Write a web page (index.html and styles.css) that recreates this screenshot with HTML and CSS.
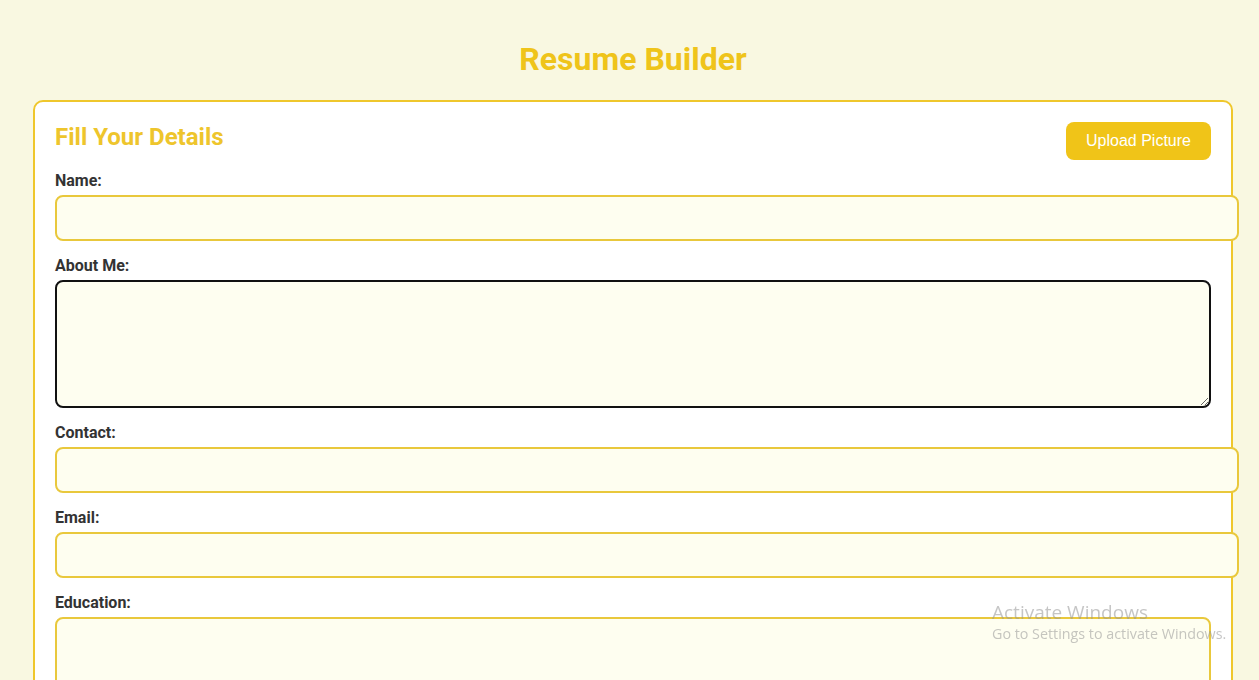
FILE: index.html
```html
<!DOCTYPE html>
<html lang="en">
<head>
<meta charset="utf-8">
<title>Resume Builder</title>
<link rel="stylesheet" href="styles.css">
</head>
<body>
<div class="page">
  <h1 class="title">Resume Builder</h1>
  <div class="card">
    <div class="card-head">
      <h2 class="card-title">Fill Your Details</h2>
      <button class="upload-btn" type="button">Upload Picture</button>
    </div>
    <label class="field-label" for="name">Name:</label>
    <input class="field-input" id="name" type="text">
    <label class="field-label" for="about">About Me:</label>
    <textarea class="field-area active" id="about" autofocus></textarea>
    <label class="field-label" for="contact">Contact:</label>
    <input class="field-input" id="contact" type="text">
    <label class="field-label" for="email">Email:</label>
    <input class="field-input" id="email" type="email">
    <label class="field-label" for="edu">Education:</label>
    <textarea class="field-area" id="edu"></textarea>
  </div>
</div>
<div class="watermark">
  <div class="wm-title">Activate Windows</div>
  <div class="wm-sub">Go to Settings to activate Windows.</div>
</div>
</body>
</html>
```

FILE: styles.css
```css
html, body {
  margin: 0;
  padding: 0;
  background: #f9f8e1;
  font-family: Roboto, "Liberation Sans", Arial, sans-serif;
  overflow: hidden;
}

.page {
  padding: 41px 26px 40px 33px;
}

.title {
  margin: 0 0 23px;
  text-align: center;
  font-size: 32px;
  line-height: 36px;
  font-weight: 700;
  color: #efc41a;
}

.card {
  background: #ffffff;
  border: 2px solid #efc72c;
  border-radius: 10px;
  padding: 20px 20px 40px 20px;
}

.card-head {
  display: flex;
  justify-content: space-between;
  align-items: flex-start;
  margin-bottom: 11px;
}

.card-title {
  margin: 0;
  font-size: 24px;
  line-height: 30px;
  font-weight: 700;
  color: #eec52c;
}

.upload-btn {
  height: 38px;
  padding: 0 20px;
  border: none;
  border-radius: 8px;
  background: #f0c418;
  color: #ffffff;
  font-family: "Liberation Sans", Arial, sans-serif;
  font-size: 16px;
  cursor: pointer;
}

.field-label {
  display: block;
  font-size: 16px;
  line-height: 20px;
  font-weight: 700;
  color: #333333;
  margin-bottom: 4px;
}

.field-input,
.field-area {
  display: block;
  background: #fefef0;
  border: 2px solid #e9c83c;
  border-radius: 8px;
  padding: 12px;
  font-family: "Liberation Sans", Arial, sans-serif;
  font-size: 16px;
  outline: none;
  margin: 0 0 15px;
}

.field-input {
  width: 100%;
  height: 18px;
  box-sizing: content-box;
}

.field-area {
  width: 100%;
  height: 128px;
  box-sizing: border-box;
  resize: vertical;
}

.field-area.active,
.field-area:focus {
  border-color: #111111;
}

.watermark {
  position: fixed;
  left: 992px;
  top: 600px;
  font-family: "Open Sans", "DejaVu Sans", sans-serif;
  color: rgba(150, 150, 150, 0.55);
  pointer-events: none;
}

.wm-title {
  font-size: 19px;
  line-height: 24px;
}

.wm-sub {
  font-size: 14.3px;
  line-height: 20px;
}
```
